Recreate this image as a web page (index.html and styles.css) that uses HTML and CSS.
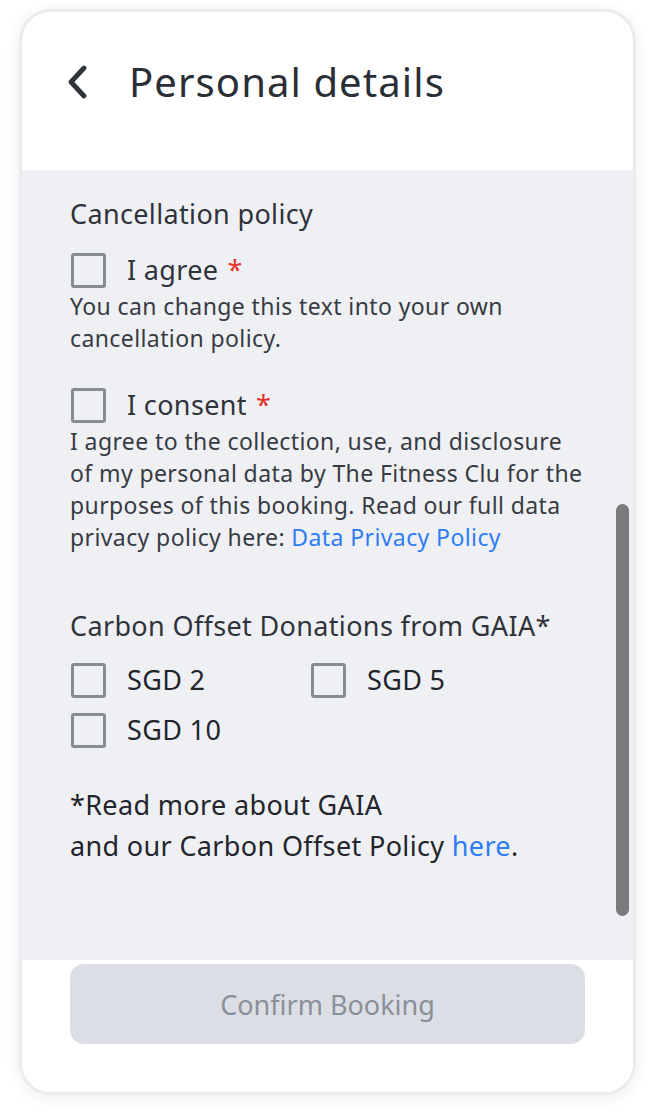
FILE: index.html
```html
<!DOCTYPE html>
<html>
<head>
<meta charset="utf-8">
<link rel="stylesheet" href="styles.css">
</head>
<body>
<div class="card">
  <header class="header">
    <svg class="back" width="24" height="34" viewBox="0 0 24 34"><path d="M19 3 L6 17 L19 31" fill="none" stroke="#2f333a" stroke-width="4.8" stroke-linecap="round" stroke-linejoin="round"/></svg>
    <h1 class="title">Personal details</h1>
  </header>
  <main class="scroll">
    <h2 class="section-title">Cancellation policy</h2>
    <div class="check-row first">
      <span class="box"></span>
      <span class="label">I agree</span><span class="req">*</span>
    </div>
    <p class="desc">You can change this text into your own cancellation policy.</p>
    <div class="check-row second">
      <span class="box"></span>
      <span class="label">I consent</span><span class="req">*</span>
    </div>
    <p class="desc">I agree to the collection, use, and disclosure of my personal data by The Fitness Clu for the purposes of this booking. Read our full data privacy policy here: <a class="link">Data Privacy Policy</a></p>
    <h2 class="section-title carbon">Carbon Offset Donations from GAIA*</h2>
    <div class="options">
      <div class="check-row"><span class="box"></span><span class="label dark">SGD 2</span></div>
      <div class="check-row"><span class="box"></span><span class="label dark">SGD 5</span></div>
      <div class="check-row"><span class="box"></span><span class="label dark">SGD 10</span></div>
    </div>
    <p class="note">*Read more about GAIA<br>and our Carbon Offset Policy <a class="link">here</a>.</p>
    <div class="thumb"></div>
  </main>
  <footer class="footer">
    <button class="confirm">Confirm Booking</button>
  </footer>
</div>
</body>
</html>
```
FILE: styles.css
```css
* { box-sizing: border-box; }
html, body { margin: 0; padding: 0; background: #ffffff; }
body {
  font-family: "Noto Sans", "Open Sans", sans-serif;
  padding: 9px 20px 0 19px;
  height: 1112px;
  overflow: hidden;
}
.card {
  width: 617px;
  height: 1086px;
  border: 3px solid #ebecf0;
  border-radius: 32px;
  background: #ffffff;
  overflow: hidden;
  display: flex;
  flex-direction: column;
  box-shadow: 0 3px 16px rgba(30, 35, 50, 0.08);
}
.header {
  height: 158px;
  flex: none;
  display: flex;
  align-items: center;
  padding: 0 0 18px 43px;
}
.back { display: block; margin-right: 40px; }
.title {
  margin: 0;
  font-family: "Noto Sans", sans-serif;
  font-weight: 400;
  font-size: 40px;
  line-height: 46px;
  color: #2a2e35;
  letter-spacing: 1.1px;
}
.scroll {
  position: relative;
  height: 790px;
  flex: none;
  background: #eff0f4;
  padding: 26px 48px 0 48px;
}
.section-title {
  margin: 0;
  font-weight: 400;
  font-size: 27px;
  line-height: 36px;
  color: #2f333a;
  letter-spacing: 0.35px;
}
.section-title.carbon { margin-top: 55px; }
.check-row {
  display: flex;
  align-items: center;
  height: 36px;
}
.check-row.first { margin-top: 20px; }
.check-row.second { margin-top: 33px; }
.box {
  width: 35px;
  height: 35px;
  border: 3px solid #868c94;
  border-radius: 3px;
  flex: none;
  margin-left: 1px;
  margin-right: 21px;
}
.label {
  font-size: 27px;
  line-height: 36px;
  color: #2f333a;
  letter-spacing: 0.35px;
}
.label.dark { color: #22252b; }
.req {
  color: #e5322d;
  font-size: 27px;
  line-height: 36px;
  margin-left: 9px;
}
.desc {
  margin: 2px 0 0 0;
  font-size: 23px;
  line-height: 32px;
  color: #373b42;
  letter-spacing: 0.4px;
}
.link { color: #2f7df6; text-decoration: none; }
.options {
  margin-top: 18px;
  display: grid;
  grid-template-columns: 240px 240px;
  row-gap: 14px;
}
.note {
  margin: 36px 0 0 0;
  font-size: 27px;
  line-height: 41px;
  color: #22252b;
  letter-spacing: 0.35px;
}
.thumb {
  position: absolute;
  right: 4px;
  top: 334px;
  width: 13px;
  height: 412px;
  border-radius: 7px;
  background: #7b7b7d;
}
.footer {
  flex: 1;
  padding: 4px 48px 0 48px;
  background: #ffffff;
}
.confirm {
  width: 100%;
  height: 80px;
  border: none;
  border-radius: 14px;
  background: #dcdee6;
  color: #8a9099;
  font-family: "Noto Sans", sans-serif;
  font-size: 27px;
  letter-spacing: 0px;
}
```
